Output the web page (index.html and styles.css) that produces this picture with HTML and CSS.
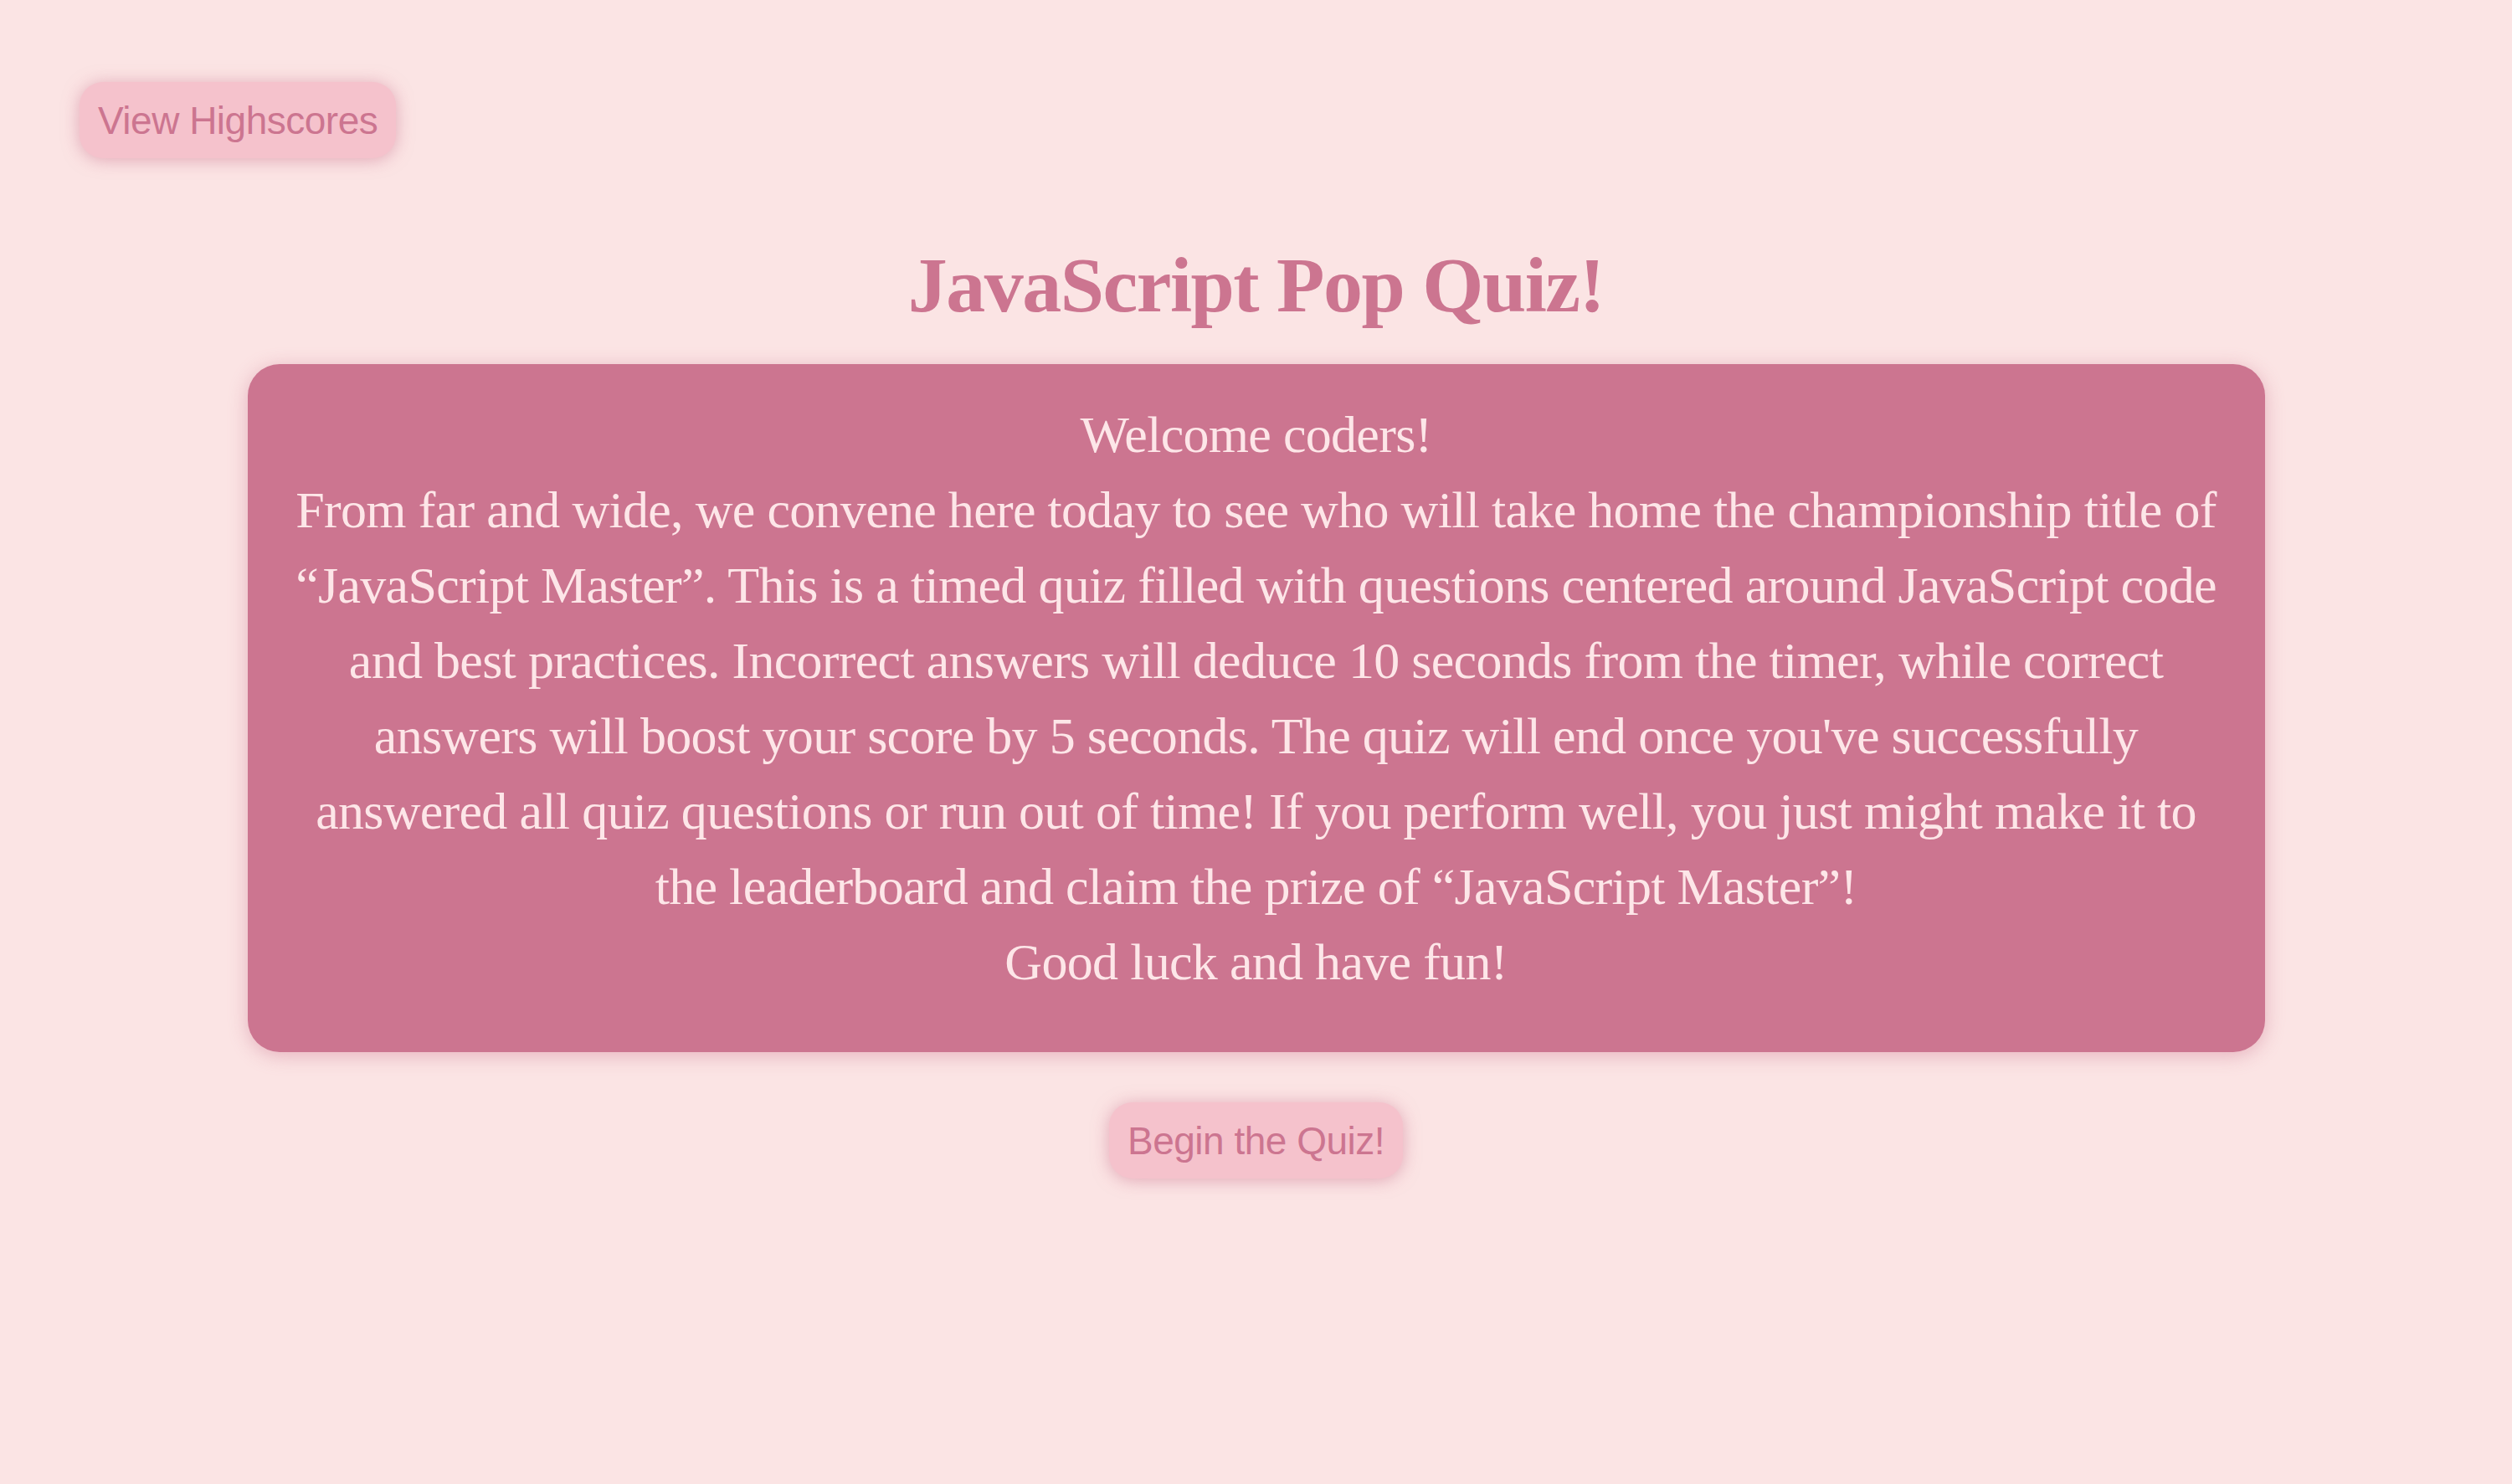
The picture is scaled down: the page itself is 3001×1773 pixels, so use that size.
FILE: index.html
```html
<!DOCTYPE html>
<html lang="en">
<head>
<meta charset="utf-8">
<title>JavaScript Pop Quiz!</title>
<link rel="stylesheet" href="styles.css">
</head>
<body>
<header class="topbar">
  <button class="btn">View Highscores</button>
</header>
<main class="main">
  <h1 class="title">JavaScript Pop Quiz!</h1>
  <section class="card">
    <p class="intro">Welcome coders!<br>From far and wide, we convene here today to see who will take home the championship title of “JavaScript Master”. This is a timed quiz filled with questions centered around JavaScript code and best practices. Incorrect answers will deduce 10 seconds from the timer, while correct answers will boost your score by 5 seconds. The quiz will end once you've successfully answered all quiz questions or run out of time! If you perform well, you just might make it to the leaderboard and claim the prize of “JavaScript Master”!<br>Good luck and have fun!</p>
  </section>
  <div class="actions">
    <button class="btn">Begin the Quiz!</button>
  </div>
</main>
</body>
</html>
```
FILE: styles.css
```css
html, body {
  margin: 0;
  padding: 0;
}
body {
  background: #fbe4e4;
  min-height: 1773px;
  font-family: "Liberation Serif", "Times New Roman", serif;
}
.topbar {
  padding: 98px 0 0 95px;
  display: flex;
}
.btn {
  font-family: "Liberation Sans", Arial, sans-serif;
  font-size: 46px;
  letter-spacing: -0.5px;
  color: #cc7590;
  background: #f5c2cc;
  border: none;
  border-radius: 28px;
  height: 91px;
  padding: 0 22px;
  box-shadow: 0 2px 20px rgba(204, 117, 144, 0.55);
  cursor: pointer;
}
.main {
  display: flex;
  flex-direction: column;
  align-items: center;
}
.title {
  margin: 96px 0 40px;
  font-size: 94px;
  letter-spacing: -1.5px;
  line-height: 110px;
  font-weight: bold;
  color: #cc7590;
  text-align: center;
}
.card {
  width: 2410px;
  box-sizing: border-box;
  background: #cc7590;
  border-radius: 38px;
  padding: 39px 40px 63px;
  box-shadow: 0 4px 22px rgba(204, 117, 144, 0.45);
}
.intro {
  margin: 0;
  font-size: 62px;
  letter-spacing: -0.7px;
  line-height: 90px;
  color: #fde6e8;
  text-align: center;
}
.actions {
  margin-top: 60px;
  display: flex;
  justify-content: center;
}
```
